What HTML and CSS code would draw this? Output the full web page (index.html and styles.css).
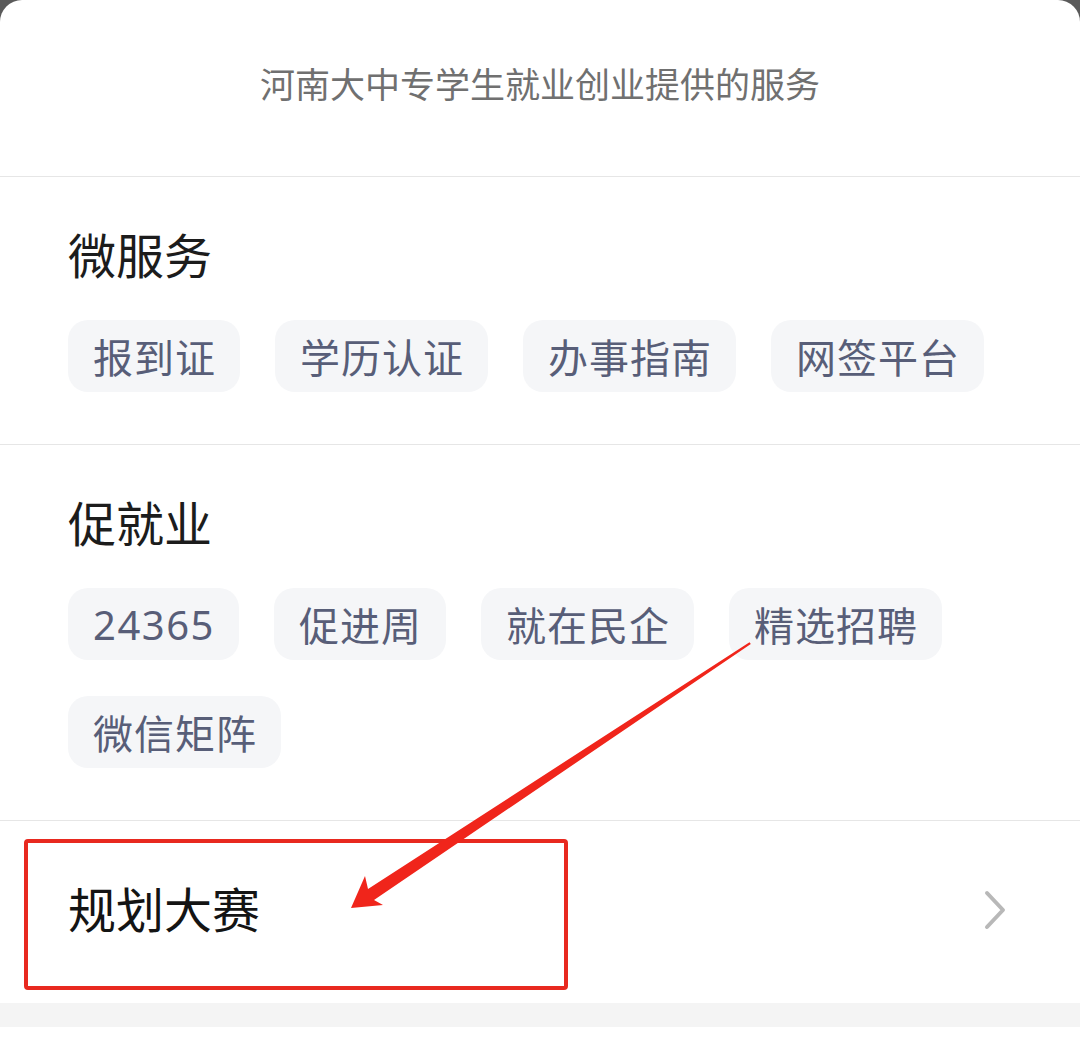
FILE: index.html
```html
<!DOCTYPE html>
<html>
<head>
  <meta charset="utf-8">
  <title>河南大中专学生就业创业服务</title>
  <link rel="stylesheet" href="styles.css">
</head>
<body>
  <div class="sheet">
    <div class="intro">河南大中专学生就业创业提供的服务</div>

    <section class="group">
      <h2 class="group-title">微服务</h2>
      <div class="tags">
        <a class="tag" href="#">报到证</a>
        <a class="tag" href="#">学历认证</a>
        <a class="tag" href="#">办事指南</a>
        <a class="tag" href="#">网签平台</a>
      </div>
    </section>

    <section class="group">
      <h2 class="group-title">促就业</h2>
      <div class="tags">
        <a class="tag tag-num" href="#">24365</a>
        <a class="tag" href="#">促进周</a>
        <a class="tag" href="#">就在民企</a>
        <a class="tag" href="#">精选招聘</a>
        <a class="tag" href="#">微信矩阵</a>
      </div>
    </section>

    <a class="entry" href="#">
      <span class="entry-title">规划大赛</span>
      <svg class="chevron" width="24" height="40" viewBox="0 0 24 40">
        <polyline points="4,3 20,20 4,37" fill="none" stroke="#b8b8b8" stroke-width="4" stroke-linecap="round" stroke-linejoin="round"/>
      </svg>
    </a>

    <div class="spacer"></div>

    <!-- marcas de anotacion sobre la captura -->
    <div class="mark-box"></div>
    <svg class="mark-arrow" width="1080" height="1047" viewBox="0 0 1080 1047">
      <polygon points="351,908 365,876 368,889 749.5,642.2 750.8,644 374,900 383,905" fill="#f0251b"/>
    </svg>
  </div>
</body>
</html>
```

FILE: styles.css
```css
body {
  margin: 0;
  background-color: #5a5a5a;
  font-family: "Noto Sans CJK SC", "Noto Sans", sans-serif;
}

.sheet {
  position: relative;
  width: 1080px;
  height: 1047px;
  background-color: #ffffff;
  border-radius: 22px 22px 0 0;
  overflow: hidden;
}

.intro {
  height: 177px;
  padding-top: 55px;
  box-sizing: border-box;
  text-align: center;
  font-size: 35px;
  line-height: 56px;
  color: #707070;
  border-bottom: 1px solid #e6e6e6;
}

.group {
  padding: 44px 68px 52px;
  border-bottom: 1px solid #e6e6e6;
}

.group-title {
  margin: 0 0 35px;
  font-size: 48px;
  font-weight: normal;
  line-height: 64px;
  color: #1c1c1c;
}

.tags {
  display: flex;
  flex-wrap: wrap;
  gap: 36px 35px;
}

.tag {
  height: 72px;
  padding: 0 24px 0 25px;
  display: flex;
  align-items: center;
  background-color: #f5f6f8;
  border-radius: 20px;
  font-size: 40px;
  letter-spacing: 1px;
  color: #585e78;
  text-decoration: none;
}

.tag-num {
  font-family: "Noto Sans", sans-serif;
  letter-spacing: 1.5px;
}

.entry {
  height: 182px;
  padding: 0 73px 0 68px;
  display: flex;
  align-items: center;
  justify-content: space-between;
  text-decoration: none;
}

.entry-title {
  margin-bottom: 10px;
  font-size: 48px;
  color: #141414;
}

.chevron {
  margin-bottom: 4px;
}

.spacer {
  height: 24px;
  background-color: #f4f4f4;
}

.mark-box {
  position: absolute;
  left: 24px;
  top: 839px;
  width: 536px;
  height: 143px;
  border: 4px solid #e8291f;
  border-radius: 4px;
}

.mark-arrow {
  position: absolute;
  left: 0;
  top: 0;
}
```
